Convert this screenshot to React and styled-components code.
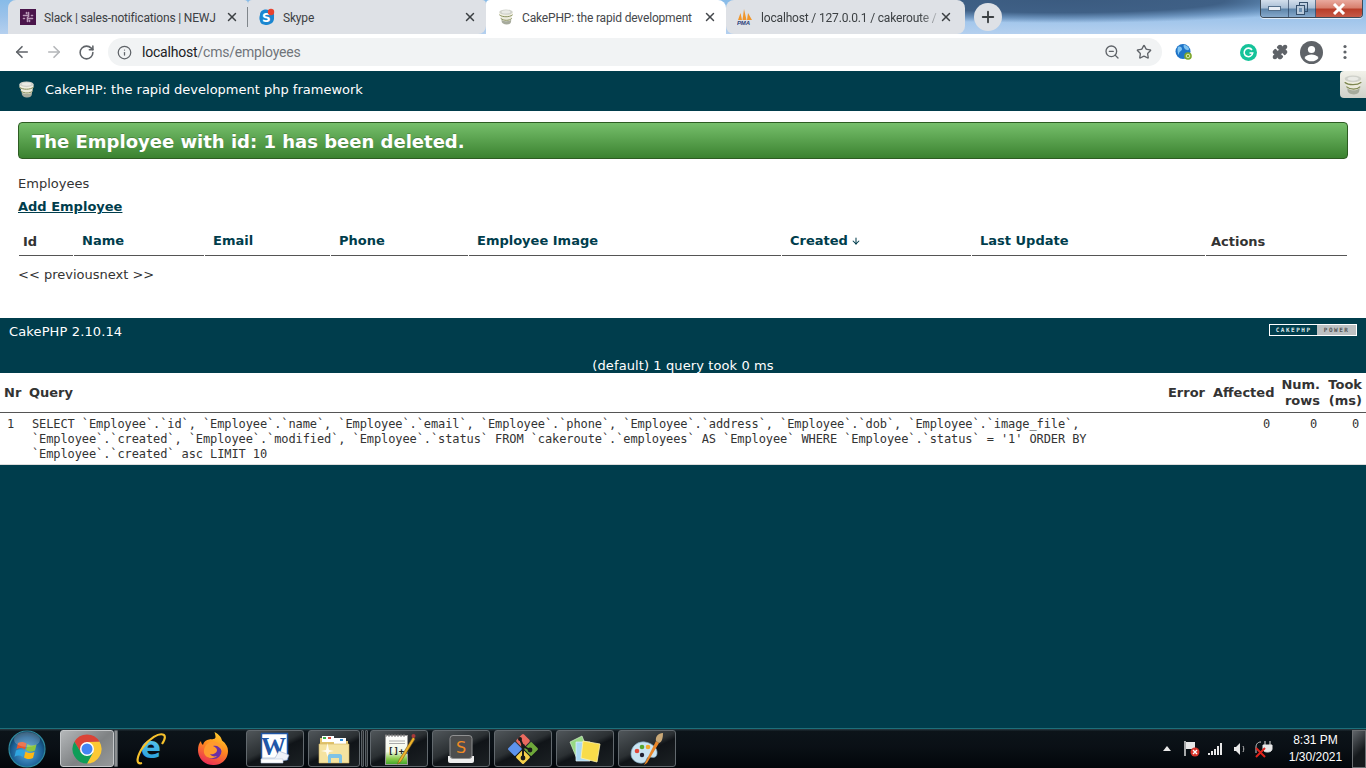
import React from "react";
import styled, { createGlobalStyle } from "styled-components";
import { ArrowLeft, ArrowRight, RotateCw, Info, ZoomOut, Star, Puzzle, X, Plus, ArrowDown } from "lucide-react";

const Global = createGlobalStyle`
  html, body { margin: 0; padding: 0; background: #003d4c; }
  * { box-sizing: border-box; }
`;

const Screen = styled.div`
  width: 1366px; height: 768px; overflow: hidden; display: flex; flex-direction: column;
  position: relative; font-family: "DejaVu Sans", Verdana, sans-serif; background: #003d4c;
`;

/* browser chrome */
const TabStrip = styled.div`
  height: 34px; flex: none; display: flex; padding-left: 8px; position: relative;
  background:
    radial-gradient(ellipse 300px 23px at 1060px 0, #3b5b80 0, #3f6086 55%, rgba(70,110,155,.55) 80%, rgba(120,170,220,0) 100%),
    linear-gradient(180deg, #87bbe8 0%, #9cc3ea 50%, #b5d0ef 100%);
`;
const Tab = styled.div`
  width: ${p => p.$w}px; height: 34px; flex: none; display: flex; align-items: center;
  padding: 0 ${p => p.$pr ?? 9}px 0 ${p => p.$pl ?? 12}px;
  gap: 8px; background: ${p => (p.$active ? "#fff" : "#dee1e6")};
  border-radius: ${p => p.$radius || "0"};
  font: 12px "Roboto", "Open Sans", sans-serif; letter-spacing: -.17px;
  color: ${p => (p.$active ? "#45484c" : "#3c4043")};
`;
const TabTitle = styled.span`
  flex: 1; white-space: nowrap; min-width: 0; padding-top: 1px;
  margin-right: ${p => (p.$fade ? "-6px" : "0")};
  ${p => (p.$fade ? "-webkit-mask-image: linear-gradient(90deg,#000 90%,rgba(0,0,0,.25)); mask-image: linear-gradient(90deg,#000 90%,rgba(0,0,0,.25));" : "")}
`;
const TabDivider = styled.div`
  width: 1px; height: 20px; background: #80868b; align-self: center; flex: none; margin-left: -1px;
`;
const NewTab = styled.div`
  width: 28px; height: 28px; border-radius: 50%; background: #dee1e6; display: flex; align-items: center;
  justify-content: center; margin: 3px 0 0 9px; color: #3c4043; flex: none;
`;
const WinControls = styled.div`
  margin-left: auto; margin-right: 3px; height: 18px; display: flex; border: 1px solid #3c4a58;
  border-top: none; border-radius: 0 0 4px 4px; overflow: hidden; flex: none; width: 103px;
  box-shadow: 0 1px 0 rgba(255,255,255,.7);
`;
const WinButton = styled.div`
  flex: ${p => p.$grow || 1}; display: flex; align-items: center; justify-content: center;
  background: ${p => (p.$close
    ? "linear-gradient(180deg,#e9a99e 0,#d8806f 45%,#b93e2a 55%,#c65a47 100%)"
    : "linear-gradient(180deg,#d3dfec 0,#a9bfd6 45%,#5f86ab 55%,#86a9cb 100%)")};
  border-right: ${p => (p.$close ? "none" : "1px solid rgba(30,50,80,.6)")};
`;

const Toolbar = styled.div`
  height: 37px; flex: none; background: #fff; display: flex; align-items: center; color: #5f6368;
  border-bottom: 1px solid #fff;
`;
const NavIcon = styled.div`
  width: 32px; display: flex; justify-content: center; align-items: center; flex: none;
  color: ${p => p.$off ? "#b4b6b9" : "#5f6368"};
`;
const NavGroup = styled.div`
  display: flex; padding-left: 6px; width: 108px; flex: none;
`;
const Omnibox = styled.div`
  width: 1054px; height: 28px; border-radius: 14px; background: #f1f3f4; display: flex; align-items: center;
  padding: 0 2px 0 9px; flex: none;
`;
const Url = styled.div`
  font: 14px "Roboto", sans-serif; color: #70757a; margin-left: 10px; flex: 1; letter-spacing: -.2px;
  b { font-weight: 400; color: #202124; }
`;
const OmniAction = styled.div`
  width: 32px; display: flex; justify-content: center; align-items: center; color: #5f6368; flex: none;
`;
const ExtSlot = styled.div`
  width: ${p => p.$w}px; margin-left: ${p => p.$ml || 0}px; display: flex; justify-content: center;
  align-items: center; flex: none;
`;

/* page */
const PageHeader = styled.header`
  height: 40px; flex: none; background: #003d4c; display: flex; align-items: center; padding: 0 0 3px 18px;
  gap: 10px; font-size: 13px; color: #fff; position: relative;
`;
const DebugTab = styled.div`
  position: absolute; right: 0; top: 0; width: 26px; height: 27px; background: linear-gradient(180deg,#f2f2ea,#cfd0c9);
  border-radius: 4px 0 0 4px; display: flex; align-items: center; justify-content: center;
`;
const Content = styled.main`
  height: 207px; flex: none; background: #fff; padding: 11px 18px 0; color: #333; font-size: 13px;
`;
const Flash = styled.div`
  height: 37px; border: 1px solid #2d5c22; border-radius: 4px; color: #fff; font-weight: 700; font-size: 18px;
  padding: 1px 13px 0; display: flex; align-items: center; background: linear-gradient(180deg,#76bf6b,#3b8230);
  text-shadow: 0 -1px 0 rgba(0,0,0,.2);
`;
const Title = styled.div`
  margin-top: 17px; height: 16px; line-height: 16px; color: #333;
`;
const AddLink = styled.a`
  display: block; margin-top: 7px; line-height: 16px; font-weight: 700; color: #003d4c; text-decoration: underline;
`;
const Grid = styled.table`
  border-collapse: separate; border-spacing: 1px 0; table-layout: fixed; width: 1330px; margin-top: 14px;
`;
const Head = styled.th`
  height: 27px; border-bottom: 1px solid #555; text-align: left; font-size: 13px; font-weight: 700;
  padding: 0 0 ${p => (p.$plain ? "2px" : "4px")} ${p => p.$pad || 8}px;
  color: ${p => (p.$plain ? "#333" : "#003d4c")};
`;
const Sort = styled.span`
  display: inline-flex; vertical-align: -1px; margin-left: 3px;
`;
const Paging = styled.div`
  margin-top: 11px; font-size: 13px; line-height: 16px; color: #333;
`;

const Footer = styled.footer`
  height: 55px; flex: none; background: #003d4c; color: #fff; font-size: 13px; padding: 6px 9px 0;
  display: flex; flex-direction: column;
`;
const FooterTop = styled.div`
  display: flex; justify-content: space-between; align-items: flex-start; line-height: 16px; height: 35px; flex: none;
  letter-spacing: .13px;
`;
const Powered = styled.div`
  width: 88px; height: 12px; border: 1px solid #fff; display: flex; font: 700 6px/10px "DejaVu Sans Mono", monospace;
  letter-spacing: 1.500px;
`;
const PowerL = styled.span`
  width: 55%; background: #003d4c; color: #dfe7ea; text-align: center;
`;
const PowerR = styled.span`
  flex: 1; background: #bcc0c2; color: #555; text-align: center;
`;
const Caption = styled.div`
  text-align: center; line-height: 14px; height: 14px; flex: none; font-size: 13px; letter-spacing: .1px;
`;

const SqlTable = styled.table`
  flex: none; width: 1366px; border-collapse: separate; border-spacing: 0; background: #fff; table-layout: fixed;
  color: #333;
`;
const SqlHead = styled.th`
  height: 40px; font-size: 13px; line-height: 16px; font-weight: 700; text-align: ${p => p.$left ? "left" : "right"};
  padding: 0 4px; border-bottom: 1px solid #555; white-space: pre-line;
`;
const SqlCell = styled.td`
  font: 12px/15px "DejaVu Sans Mono", monospace; letter-spacing: -.1px; padding: 4px 7px 2px ${p => p.$pl || 4}px; height: 52px;
  vertical-align: top; text-align: ${p => p.$left ? "left" : "right"}; border-bottom: 1px solid #ddd;
`;
const Spacer = styled.div`
  flex: 1; background: #003d4c;
`;

/* taskbar */
const Taskbar = styled.div`
  height: 40px; flex: none; display: flex; align-items: center;
  background: linear-gradient(180deg,#2a3a42 0,#0c1419 6%,#0a1016 45%,#02060a 100%);
  border-top: 1px solid #1d6f7a;
`;
const Orb = styled.div`
  width: 60px; flex: none; display: flex; justify-content: center; padding-right: 6px;
`;
const TaskButton = styled.div`
  width: ${p => p.$w}px; height: 37px; margin-left: ${p => p.$ml || 0}px; flex: none; display: flex; align-items: center;
  justify-content: center; border-radius: 3px;
  border: ${p => p.$plain ? "1px solid transparent" : `1px solid ${p.$on ? "#c5c8ca" : "#62696e"}`};
  background: ${p => p.$plain ? "transparent" : p.$on ? "linear-gradient(140deg,#b4b7b9,#7f8284 55%,#96999a)" : "linear-gradient(155deg,#50565a 0,#2b3033 45%,#101418 55%,#1c2124 100%)"};
`;
const Sliver = styled.div`
  width: ${p => p.$w || 4}px; height: 37px; flex: none; margin-left: ${p => p.$ml || 0}px; border: 1px solid #5a6166; background: ${p => p.$bg || "#2a2e31"};
  border-radius: 1px;
`;
const Tray = styled.div`
  margin-left: auto; display: flex; align-items: center; height: 100%; flex: none;
`;
const TrayIcon = styled.div`
  width: ${p => p.$w || 24}px; display: flex; justify-content: center; align-items: center; flex: none;
`;
const Clock = styled.div`
  width: 76px; font: 12px/17px "Liberation Sans", Arial, sans-serif; color: #fff; text-align: center; padding-left: 3px;
`;
const ShowDesktop = styled.div`
  width: 14px; height: 38px; border: 1px solid #6b6f72; background: linear-gradient(135deg,#60656a,#15191c 60%); flex: none;
`;

/* drawings */
const CakeIcon = ({ size = 18 }) => (
  <svg width={size} height={size} viewBox="0 0 18 18">
    <path d="M4 13.500c0 2.200 2.500 4 5.800 4s5-1.800 5-4v-3H4z" fill="#a6aa9c" />
    <path d="M3 10c0 2 2.800 3.800 6.500 3.800s6-1.800 6-3.800V7.500H3z" fill="#ecebdd" />
    <path d="M3 10.500c2 1.700 4.300 2.200 6.500 2.200s4.500-.6 6-2.200" fill="none" stroke="#7d8650" strokeWidth="1" />
    <path d="M1.500 6c0 2 3.300 3.500 7.500 3.500s7.500-1.500 7.500-3.500V3.500h-15z" fill="#f1f0e2" />
    <path d="M1.500 6.500c2 1.700 4.800 2.200 7.500 2.200s5.500-.6 7.500-2.200" fill="none" stroke="#7d8650" strokeWidth="1" />
    <ellipse cx="9" cy="3.500" rx="7.500" ry="3" fill="#cfd1ca" />
    <ellipse cx="9" cy="3.300" rx="5" ry="1.800" fill="#e9eae5" />
  </svg>
);
const SlackIcon = () => (
  <svg width="16" height="16" viewBox="0 0 16 16">
    <rect width="16" height="16" fill="#4a154b" />
    <g stroke="#b99ab9" strokeWidth="1.600" strokeLinecap="round">
      <path d="M3.500 6.500h4M8.500 3.500v4M12.500 9.500h-4M7.500 12.500v-4M6.500 3.500v1M3.500 9.500h1M12.500 6.500h-1M9.500 12.500v-1" />
    </g>
  </svg>
);
const SkypeIcon = () => (
  <svg width="16" height="18" viewBox="0 0 16 18">
    <path d="M7 1.500c2 0 3 .8 4 1.500 3 0 4.500 2.500 4 6 .3 3-1 6-3 6.500-1.500 1.500-4 1.500-5.500 1.500C4 16.500 1.500 16 1 13 0 11 .5 8 1 7 1 3 4 1.500 7 1.500z" fill="#1a86d0" />
    <text x="3" y="14" fontFamily="DejaVu Sans" fontWeight="700" fontSize="12" fill="#fff">S</text>
    <circle cx="12" cy="4" r="3.200" fill="#e8432f" />
  </svg>
);
const PmaIcon = () => (
  <svg width="16" height="18" viewBox="0 0 16 18">
    <path d="M1 12 3.500 5 5 12zM5.500 12 7 1l2.500 11zM10 12l1-7 4 7z" fill="#f0962c" />
    <text x="0" y="17" fontFamily="Liberation Sans" fontWeight="700" fontStyle="italic" fontSize="6" fill="#2a3f7a">PMA</text>
  </svg>
);
const GlobeExt = () => (
  <svg width="18" height="18" viewBox="0 0 18 18">
    <circle cx="8" cy="8.500" r="7.500" fill="#1e74c8" />
    <path d="M3 4c2-1 4 0 4 2S4 8 4 11 1.500 8 3 4zM9 2c2 0 5 2 5 4s-3 1-4 0-2-4-1-4z" fill="#7fc3f0" />
    <circle cx="13" cy="13" r="3.800" fill="#7ba428" />
    <circle cx="13" cy="13" r="1.800" fill="none" stroke="#dbe9b4" />
  </svg>
);
const Grammarly = () => (
  <svg width="17" height="17" viewBox="0 0 17 17">
    <circle cx="8.500" cy="8.500" r="8.500" fill="#15c39a" />
    <path d="M12 6a4.300 4.300 0 1 0 .7 3H9.500" fill="none" stroke="#fff" strokeWidth="1.600" />
  </svg>
);
const Avatar = () => (
  <svg width="23" height="23" viewBox="0 0 23 23">
    <circle cx="11.500" cy="11.500" r="11.500" fill="#5f6368" />
    <circle cx="11.500" cy="8.500" r="3.600" fill="#fff" />
    <path d="M4.500 17c1.500-2.600 4.500-3.500 7-3.500s5.500.9 7 3.500a9 9 0 0 1-14 0z" fill="#fff" />
  </svg>
);
const Dots = () => (
  <svg width="4" height="16" viewBox="0 0 4 16" fill="#5f6368">
    <circle cx="2" cy="2.500" r="1.600" /><circle cx="2" cy="8" r="1.600" /><circle cx="2" cy="13.500" r="1.600" />
  </svg>
);
const WinOrb = () => (
  <svg width="38" height="38" viewBox="0 0 38 38">
    <defs>
      <radialGradient id="orb" cx=".5" cy=".6" r=".6"><stop offset="0" stopColor="#5aa9dc" /><stop offset=".7" stopColor="#1a5f95" /><stop offset="1" stopColor="#0b3350" /></radialGradient>
    </defs>
    <circle cx="19" cy="19" r="18" fill="url(#orb)" stroke="#2f8aa0" strokeWidth="1.200" />
    <path d="M10 13c3-1.500 5.500-1.500 8.500.5l-1.500 6c-3-1.800-5.500-1.800-8.500-.5z" fill="#e8562a" />
    <path d="M19.500 14c3 2 5.500 2 9 .5l-1.500 6c-3 1.500-5.500 1.500-9-.5z" fill="#8dc63f" />
    <path d="M8 20.500c3-1.300 5.500-1.300 8.500.5L15 27c-3-1.800-5.500-1.800-8.500-.3z" fill="#2fa5e0" />
    <path d="M17.500 21.500c3 2 5.500 2 9 .5L25 28c-3 1.600-5.500 1.500-9-.5z" fill="#fdb813" />
    <ellipse cx="19" cy="9.500" rx="13" ry="7.500" fill="#fff" opacity=".2" />
  </svg>
);
const ChromeIcon = () => (
  <svg width="30" height="30" viewBox="0 0 30 30">
    <path d="M2.440 7.750A14.500 14.500 0 0 1 27.560 7.750L15 8 8.940 18.500z" fill="#db4437" />
    <path d="M27.560 7.750A14.500 14.500 0 0 1 15 29.500L21.060 18.500 15 8z" fill="#fcc934" />
    <path d="M15 29.500A14.500 14.500 0 0 1 2.440 7.750L8.940 18.500H21.060z" fill="#0f9d58" />
    <circle cx="15" cy="15" r="7" fill="#fff" />
    <circle cx="15" cy="15" r="5.500" fill="#4285f4" />
  </svg>
);
const IeIcon = () => (
  <svg width="32" height="34" viewBox="0 0 32 34">
    <defs><linearGradient id="ie" x1="0" y1="0" x2="0" y2="1"><stop offset="0" stopColor="#6fd4f5" /><stop offset="1" stopColor="#1a97d6" /></linearGradient></defs>
    <text x="16" y="26" textAnchor="middle" fontFamily="DejaVu Sans" fontWeight="700" fontSize="30" fill="url(#ie)">e</text>
    <path d="M7 31C0 33 2 24 8 15 14 7 24 0 29 3c2 2 0 6-2 9" fill="none" stroke="#f6c12c" strokeWidth="2.200" />
  </svg>
);
const FirefoxIcon = () => (
  <svg width="32" height="34" viewBox="0 0 32 34">
    <defs><linearGradient id="ff" x1=".7" y1="0" x2=".3" y2="1"><stop offset="0" stopColor="#ffd02e" /><stop offset=".45" stopColor="#ff8a1f" /><stop offset="1" stopColor="#ea2a58" /></linearGradient></defs>
    <path d="M16 33C7 33 1 26 1 18c0-4 1-7 3-9 0 2 1 3 2 4 1-4 3.500-5 6-5.500 3-.5 6.500 0 6.500-2.500 0-2-.5-3-1-5 5 2.500 7 6 7.500 8.500 4 3 6 6.500 6 10.500 0 8-6 14-14 14z" fill="url(#ff)" />
    <circle cx="16.500" cy="19" r="8" fill="#6b2fa5" />
    <path d="M9 13c2-3 6-4 9-3 5 1 8 5 7 9-2-4-5-6-9-5 2 1 4 2 4 4 0 3-4 5-7 4 1 2 4 3 7 2-3 3-9 3-12-1-2-3-1-7 1-10z" fill="#ff9a2e" />
  </svg>
);
const WordIcon = () => (
  <svg width="32" height="33" viewBox="0 0 32 33">
    <rect x="2.500" y="1.500" width="26" height="26" fill="#fff" stroke="#1f55a5" strokeWidth="1.500" />
    <text x="14.500" y="23" textAnchor="middle" fontFamily="Liberation Serif" fontWeight="700" fontSize="25" fill="#2157a8">W</text>
    <path d="M20 19l10 4-2 5-7 1H3v-3h13z" fill="#eef2f9" stroke="#9fb0cc" strokeWidth=".6" />
    <path d="M2 27h22v4H2z" fill="#fff" stroke="#b9c6dc" strokeWidth=".6" />
  </svg>
);
const FolderIcon = () => (
  <svg width="32" height="32" viewBox="0 0 32 32">
    <path d="M2 5h10l2 3h16v21H2z" fill="#e2c36b" />
    <rect x="4" y="3" width="12" height="6" fill="#fff" /><rect x="5" y="4" width="3" height="2" fill="#3fae49" /><rect x="10" y="4" width="3" height="2" fill="#d9503f" />
    <rect x="16" y="5" width="12" height="6" fill="#fff" /><rect x="22" y="6" width="3" height="2" fill="#2f8fd9" />
    <path d="M1 11h30v19H1z" fill="#f5e3a0" stroke="#d0b162" strokeWidth=".6" />
    <path d="M10 30v-7c0-1 1-2 2-2h10c1 0 2 1 2 2v7h-3v-5h-8v5z" fill="#7fc3e6" />
    <path d="M8 17l1.500-7 1.500 7 5 1-5 1-1.500 5-1.500-5-5-1z" fill="#fff" opacity=".85" />
  </svg>
);
const NotepadIcon = () => (
  <svg width="34" height="34" viewBox="0 0 34 34">
    <defs><linearGradient id="np" x1="0" y1="0" x2="0" y2="1"><stop offset="0" stopColor="#fff" /><stop offset=".55" stopColor="#f2f7e6" /><stop offset=".8" stopColor="#8ccc4c" /><stop offset="1" stopColor="#3ea32a" /></linearGradient></defs>
    <rect x="3.500" y="3.500" width="22" height="29" fill="url(#np)" stroke="#9a9a9a" />
    <path d="M4 2v3M7 2v3M10 2v3M13 2v3M16 2v3M19 2v3M22 2v3" stroke="#777" />
    <path d="M7 9h16M7 11.500h16" stroke="#aaa" />
    <text x="6" y="22" fontFamily="DejaVu Sans Mono" fontSize="9" fontWeight="700" fill="#222">{"[]++"}</text>
    <path d="M31 5 17 28l-1.500 4 3.500-2.500L33 7z" fill="#eeb32a" stroke="#7b5a1a" strokeWidth=".6" />
    <circle cx="31.500" cy="4" r="2" fill="#a83a3a" />
  </svg>
);
const SublimeIcon = () => (
  <svg width="30" height="30" viewBox="0 0 30 30">
    <path d="M2 22h26v5a2 2 0 0 1-2 2H4a2 2 0 0 1-2-2z" fill="#eee" />
    <rect x="4" y="1.500" width="22" height="23" rx="3" fill="#4d4e4f" stroke="#909192" />
    <text x="15" y="19" textAnchor="middle" fontFamily="DejaVu Sans" fontSize="16" fill="#f08a24">S</text>
  </svg>
);
const GitIcon = () => (
  <svg width="34" height="34" viewBox="0 0 34 34">
    <g transform="rotate(45 17 17)">
      <rect x="6" y="6" width="10.500" height="10.500" rx="1.500" fill="#ea6a5f" />
      <rect x="17.500" y="6" width="10.500" height="10.500" rx="1.500" fill="#6ea83a" />
      <rect x="6" y="17.500" width="10.500" height="10.500" rx="1.500" fill="#5d93ec" />
      <rect x="17.500" y="17.500" width="10.500" height="10.500" rx="1.500" fill="#f5d04a" />
    </g>
    <path d="M14 7l3 7v12M17 14l7 4" stroke="#1a1a1a" strokeWidth="2" fill="none" />
    <circle cx="14" cy="7" r="2" fill="#1a1a1a" /><circle cx="17" cy="14" r="2" fill="#1a1a1a" />
    <circle cx="24" cy="18" r="2.400" fill="#1a1a1a" /><circle cx="17" cy="26" r="2.400" fill="#1a1a1a" />
  </svg>
);
const StickyIcon = () => (
  <svg width="32" height="30" viewBox="0 0 32 30">
    <path d="M1 8 13 2l7 18-12 5z" fill="#97d884" stroke="#d6f0cc" strokeWidth=".7" />
    <path d="M7 8h14v19H7z" fill="#a9d9f3" stroke="#e4f3fb" strokeWidth=".7" />
    <path d="M14 7l17 3-3 18-16-4z" fill="#f9dc4a" stroke="#fff4b0" strokeWidth=".8" />
  </svg>
);
const PaintIcon = () => (
  <svg width="34" height="34" viewBox="0 0 34 34">
    <path d="M1 22C1 14 8 9 15 10s13 6 12 12c-1 5-5 3-8 3s-2 5-6 6c-6 1-12-3-12-9z" fill="#c9e4f2" stroke="#7da3ba" strokeWidth=".7" />
    <circle cx="7" cy="19" r="2.300" fill="#e0483a" /><circle cx="12" cy="15" r="2.300" fill="#55a630" />
    <circle cx="18" cy="15" r="2.300" fill="#f2a92e" /><circle cx="12" cy="23" r="2.200" fill="#223" />
    <path d="M26 9 15 31l-1 2 3-2L29 11z" fill="#e8862a" />
    <path d="M26 9c-1-4 2-8 7-8 0 5-1 9-4 10z" fill="#c9a877" />
  </svg>
);
const TrayFlag = () => (
  <svg width="20" height="18" viewBox="0 0 20 18">
    <path d="M3 1v15" stroke="#ddd" strokeWidth="1.500" />
    <path d="M4 2h9v7H4z" fill="#e8e8e8" />
    <circle cx="13" cy="12" r="4.500" fill="#d9342a" />
    <path d="M11 10l4 4M15 10l-4 4" stroke="#fff" strokeWidth="1.400" />
  </svg>
);
const TraySignal = () => (
  <svg width="16" height="14" viewBox="0 0 16 14" fill="#e8e8e8">
    <rect x="0" y="11" width="2" height="2" /><rect x="3" y="9" width="2" height="4" /><rect x="6" y="7" width="2" height="6" />
    <rect x="9" y="4" width="2" height="9" /><rect x="12" y="1" width="2" height="12" />
  </svg>
);
const TraySpeaker = () => (
  <svg width="16" height="16" viewBox="0 0 16 16">
    <path d="M2 6h2l4-4v12l-4-4H2z" fill="#e8e8e8" />
    <path d="M11 5c1 2 1 4 0 6" stroke="#bbb" fill="none" />
  </svg>
);
const TrayPower = () => (
  <svg width="20" height="18" viewBox="0 0 20 18">
    <path d="M7 2c-4 0-5 3-5 5v6" stroke="#ccc" fill="none" />
    <path d="M11 1v4M16 1v4M9 5h9v4c0 2-2 3-4.500 3S9 11 9 9z" fill="#e8e8e8" stroke="#e8e8e8" />
    <path d="M2 8l9 9M11 8l-9 9" stroke="#e0241c" strokeWidth="2" />
  </svg>
);

const columns = [
  { label: "Id", w: 54, plain: true, pad: 4 },
  { label: "Name", w: 130 },
  { label: "Email", w: 125 },
  { label: "Phone", w: 137 },
  { label: "Employee Image", w: 312 },
  { label: "Created", w: 189, sort: true },
  { label: "Last Update", w: 233 },
  { label: "Actions", w: 141, plain: true, pad: 5 },
];

const sqlCols = [
  { label: "Nr", w: 25, left: true },
  { label: "Query", w: 1138, left: true },
  { label: "Error", w: 46 },
  { label: "Affected", w: 68 },
  { label: "Num.\nrows", w: 47 },
  { label: "Took\n(ms)", w: 42 },
];

export default function App() {
  return (
    <Screen>
      <Global />
      <TabStrip>
        <Tab $w={240} $radius="8px 4px 0 0">
          <SlackIcon />
          <TabTitle>Slack | sales-notifications | NEWJ</TabTitle>
          <X size={14} strokeWidth={2.5} />
        </Tab>
        <TabDivider />
        <Tab $w={238} $pl={11} $radius="4px 4px 8px 0">
          <SkypeIcon />
          <TabTitle>Skype</TabTitle>
          <X size={14} strokeWidth={2.5} />
        </Tab>
        <Tab $w={240} $active $radius="4px 8px 0 0">
          <CakeIcon size={16} />
          <TabTitle>CakePHP: the rapid development</TabTitle>
          <X size={14} strokeWidth={2.5} />
        </Tab>
        <Tab $w={239} $pl={11} $pr={12} $radius="8px 8px 8px 8px">
          <PmaIcon />
          <TabTitle $fade>localhost / 127.0.0.1 / cakeroute /</TabTitle>
          <X size={14} strokeWidth={2.5} />
        </Tab>
        <NewTab><Plus size={18} strokeWidth={2.5} /></NewTab>
        <WinControls>
          <WinButton $grow={28}><svg width="13" height="5"><rect x=".5" y=".5" width="12" height="4" fill="#e8eef5" stroke="#55708c" /></svg></WinButton>
          <WinButton $grow={27}><svg width="12" height="13"><rect x="3.500" y=".5" width="8" height="9" fill="none" stroke="#36506c" /><rect x=".5" y="3.500" width="8" height="9" fill="#b9cadb" stroke="#36506c" /><rect x="3" y="6" width="3" height="4" fill="#6f92b3" /></svg></WinButton>
          <WinButton $grow={47} $close><svg width="14" height="12"><path d="M2 1l10 10M12 1 2 11" stroke="#fff" strokeWidth="3" /></svg></WinButton>
        </WinControls>
      </TabStrip>

      <Toolbar>
        <NavGroup>
          <NavIcon><ArrowLeft size={18} strokeWidth={2.2} /></NavIcon>
          <NavIcon $off><ArrowRight size={18} strokeWidth={2.2} /></NavIcon>
          <NavIcon><RotateCw size={17} strokeWidth={2.2} /></NavIcon>
        </NavGroup>
        <Omnibox>
          <Info size={15} />
          <Url><b>localhost</b>/cms/employees</Url>
          <OmniAction><ZoomOut size={16} /></OmniAction>
          <OmniAction><Star size={16} strokeWidth={2} /></OmniAction>
        </Omnibox>
        <ExtSlot $w={18} $ml={13}><GlobeExt /></ExtSlot>
        <ExtSlot $w={18} $ml={46}><Grammarly /></ExtSlot>
        <ExtSlot $w={18} $ml={14}><Puzzle size={16} fill="#5f6368" color="#5f6368" /></ExtSlot>
        <ExtSlot $w={23} $ml={11}><Avatar /></ExtSlot>
        <ExtSlot $w={4} $ml={20}><Dots /></ExtSlot>
      </Toolbar>

      <PageHeader>
        <CakeIcon size={17} />
        <span>CakePHP: the rapid development php framework</span>
        <DebugTab><CakeIcon size={20} /></DebugTab>
      </PageHeader>

      <Content>
        <Flash>The Employee with id: 1 has been deleted.</Flash>
        <Title>Employees</Title>
        <AddLink href="#">Add Employee</AddLink>
        <Grid>
          <colgroup>
            {columns.map(c => <col key={c.label} style={{ width: c.w }} />)}
          </colgroup>
          <thead>
            <tr>
              {columns.map(c => (
                <Head key={c.label} $plain={c.plain} $pad={c.pad}>
                  {c.label}
                  {c.sort && <Sort><ArrowDown size={10} strokeWidth={2.5} /></Sort>}
                </Head>
              ))}
            </tr>
          </thead>
        </Grid>
        <Paging>{"<< previousnext >>"}</Paging>
      </Content>

      <Footer>
        <FooterTop>
          <span>CakePHP 2.10.14</span>
          <Powered><PowerL>CAKEPHP</PowerL><PowerR>POWER</PowerR></Powered>
        </FooterTop>
        <Caption>(default) 1 query took 0 ms</Caption>
      </Footer>

      <SqlTable>
        <colgroup>
          {sqlCols.map(c => <col key={c.label} style={{ width: c.w }} />)}
        </colgroup>
        <thead>
          <tr>{sqlCols.map(c => <SqlHead key={c.label} $left={c.left}>{c.label}</SqlHead>)}</tr>
        </thead>
        <tbody>
          <tr>
            <SqlCell $left $pl={7}>1</SqlCell>
            <SqlCell $left $pl={7}>
              SELECT `Employee`.`id`, `Employee`.`name`, `Employee`.`email`, `Employee`.`phone`, `Employee`.`address`, `Employee`.`dob`, `Employee`.`image_file`,<br />
              `Employee`.`created`, `Employee`.`modified`, `Employee`.`status` FROM `cakeroute`.`employees` AS `Employee` WHERE `Employee`.`status` = '1' ORDER BY<br />
              `Employee`.`created` asc LIMIT 10
            </SqlCell>
            <SqlCell />
            <SqlCell>0</SqlCell>
            <SqlCell>0</SqlCell>
            <SqlCell>0</SqlCell>
          </tr>
        </tbody>
      </SqlTable>
      <Spacer />

      <Taskbar>
        <Orb><WinOrb /></Orb>
        <TaskButton $w={54} $on><ChromeIcon /></TaskButton>
        <Sliver $bg="#8c8f91" />
        <TaskButton $w={55} $ml={5} $plain><IeIcon /></TaskButton>
        <TaskButton $w={55} $ml={7} $plain><FirefoxIcon /></TaskButton>
        <TaskButton $w={58} $ml={6}><WordIcon /></TaskButton>
        <TaskButton $w={52} $ml={4}><FolderIcon /></TaskButton>
        <Sliver $w={3} $ml={1} />
        <Sliver $w={3} $ml={1} />
        <TaskButton $w={58} $ml={2}><NotepadIcon /></TaskButton>
        <TaskButton $w={58} $ml={4}><SublimeIcon /></TaskButton>
        <TaskButton $w={58} $ml={4}><GitIcon /></TaskButton>
        <TaskButton $w={58} $ml={4}><StickyIcon /></TaskButton>
        <TaskButton $w={58} $ml={4}><PaintIcon /></TaskButton>
        <Tray>
          <TrayIcon $w={26}><svg width="8" height="5"><path d="M4 0l4 5H0z" fill="#e8e8e8" /></svg></TrayIcon>
          <TrayIcon><TrayFlag /></TrayIcon>
          <TrayIcon><TraySignal /></TrayIcon>
          <TrayIcon><TraySpeaker /></TrayIcon>
          <TrayIcon><TrayPower /></TrayIcon>
          <Clock>8:31 PM<br />1/30/2021</Clock>
          <ShowDesktop />
        </Tray>
      </Taskbar>
    </Screen>
  );
}
